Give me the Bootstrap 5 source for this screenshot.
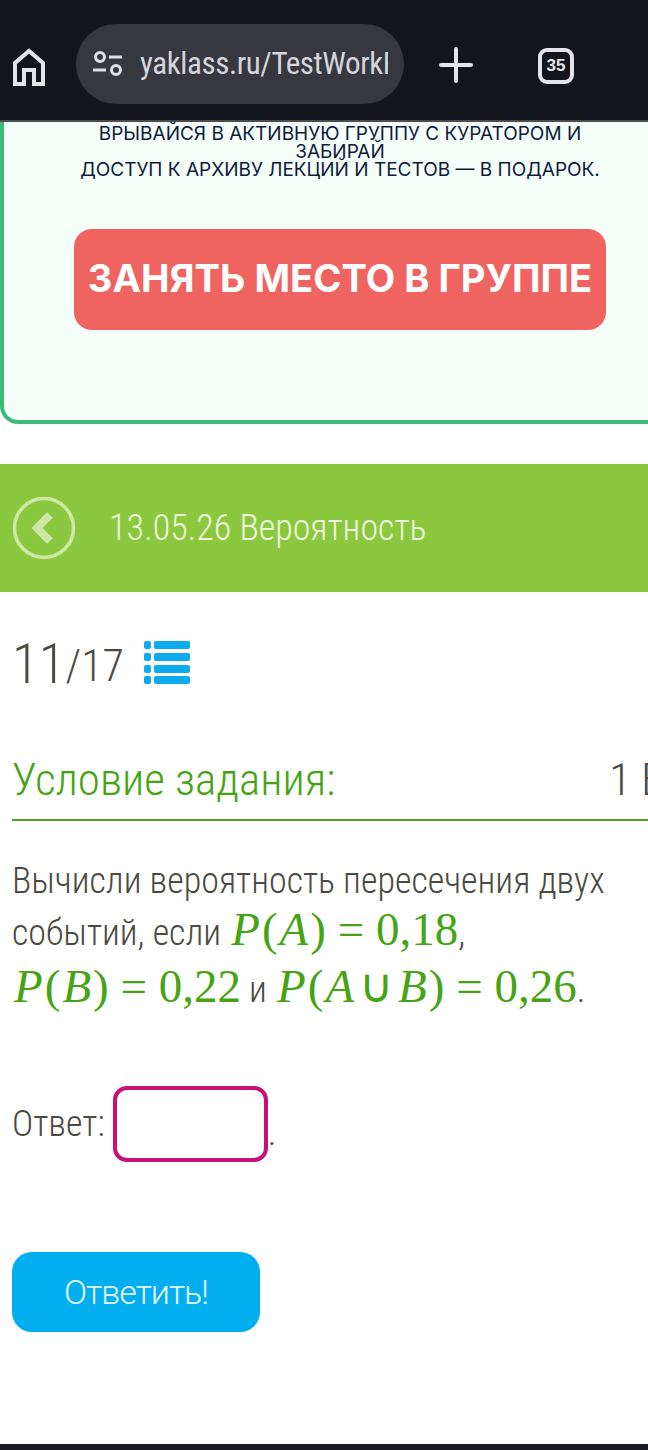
<!DOCTYPE html>
<html lang="ru">
<head>
  <meta charset="UTF-8" />
  <meta name="viewport" content="width=device-width, initial-scale=1.0" />
  <title>Условие задания</title>
  <link href="https://cdn.jsdelivr.net/npm/bootstrap@5.3.0/dist/css/bootstrap.min.css" rel="stylesheet" />
  <style>
    html, body { margin: 0; background: #fff; overflow: hidden; }
    .screen { width: 648px; height: 1450px; overflow: hidden; font-family: "Roboto", "Liberation Sans", sans-serif; font-weight: 300; font-stretch: 75%; color: #4a4a42; }

    .browser-bar { height: 122px; background: #14141c; border-bottom: 2px solid #4a4d50; padding: 24px 0 0 12px; }
    .home-ico { flex: none; }
    .url-pill { width: 328px; height: 80px; background: #37373f; border-radius: 40px; margin-left: 30px; padding-left: 16px; color: #d5d5da; font-size: 31px; font-weight: 400; overflow: hidden; white-space: nowrap; }
    .url-text { width: 248px; overflow: hidden; margin-left: 16px; letter-spacing: -.4px; }
    .tab-plus { margin-left: 35px; }
    .tab-count { margin-left: 65px; width: 36px; height: 36px; border: 4px solid #e4e4e8; border-radius: 9px; color: #e4e4e8; font: 700 17px "Liberation Sans", sans-serif; }

    .promo { width: 680px; height: 302px; background: #f5fffa; border: 4px solid #3dba78; border-top: 0; border-radius: 0 0 18px 18px; font-family: "Inter", "Liberation Sans", sans-serif; font-weight: 400; font-stretch: normal; color: #0f1b3d; font-size: 19px; line-height: 18px; text-align: center; }
    .promo-text { padding: 3px 70px 0; }
    .promo-btn { width: 532px; height: 101px; margin: 50px 0 0 70px; padding-bottom: 4px; background: #ef6461; border-radius: 18px; color: #fff; font-size: 38.2px; font-weight: 700; }

    .topic-bar { height: 128px; margin-top: 40px; background: #8cc83f; color: #eef8df; font-size: 36px; padding-left: 12px; }
    .back-btn { width: 64px; height: 64px; margin-right: 33px; }

    .counter { margin: 40px 0 0 12px; height: 64px; }
    .count-now { font-size: 55px; line-height: 64px; }
    .count-all { font-size: 44px; line-height: 64px; margin-top: 4px; }
    .list-ico { margin-left: 20px; margin-top: -2px; }

    .task-head { margin: 56px 0 0 12px; height: 69px; border-bottom: 2px solid #4aa31c; color: #46a414; font-size: 45px; line-height: 56px; white-space: nowrap; overflow: hidden; }
    .score { color: #4a4a42; margin-left: 274px; }

    .task-text { margin: 34px 0 0 12px; width: 620px; min-height: 162px; font-size: 36px; line-height: 52px; }
    .last-line { display: block; margin-top: 5px; }
    .formula { font-family: "Liberation Serif", serif; font-weight: 400; font-stretch: normal; font-size: 47px; line-height: 44px; color: #46a414; white-space: nowrap; }
    .formula i { font-style: italic; margin: 0 2px; }
    .union { margin: 0 3px; }

    .answer-row { margin: 69px 0 0 12px; font-size: 36px; height: 76px; }
    .answer-box { width: 155px; height: 76px; margin: 0 0 0 8px; border: 4px solid #c9107a; border-radius: 14px; background: #fff; outline: 0; }
    .dot { align-self: flex-end; margin-bottom: 2px; }

    .send-btn { display: block; width: 248px; height: 80px; margin: 90px 0 0 12px; padding: 0; background: #02aeef; border: 0; border-radius: 20px; color: #e2f6fe; font-size: 34px; letter-spacing: -1px; font-weight: 300; }
    .bottom-strip { height: 6px; margin-top: 112px; background: #1c1c26; }
  </style>
</head>
<body>
  <div class="screen">
    <div class="browser-bar d-flex align-items-start">
      <svg class="home-ico mt-4" width="34" height="38" viewBox="0 0 34 38" fill="none" stroke="#e4e4e8" stroke-width="4"><path d="M3 36V15L17 3l14 12v21h-9V22H12v14z"/></svg>
      <div class="url-pill d-flex align-items-center">
        <svg width="32" height="28" viewBox="0 0 32 28" fill="none" stroke="#e0e0e4" stroke-width="3"><circle cx="8" cy="7" r="4.5"/><path d="M17 7h13M1 20h13"/><circle cx="24" cy="20" r="4.5"/></svg>
        <div class="url-text">yaklass.ru/TestWorkRun</div>
      </div>
      <svg class="tab-plus mt-3" width="34" height="50" viewBox="0 0 34 50" stroke="#e4e4e8" stroke-width="4" stroke-linecap="round"><path d="M17 9v32M2 25h30"/></svg>
      <div class="tab-count d-flex align-items-center justify-content-center mt-4">35</div>
    </div>

    <div class="promo">
      <div class="promo-text">ВРЫВАЙСЯ В АКТИВНУЮ ГРУППУ С КУРАТОРОМ И ЗАБИРАЙ<br />ДОСТУП К АРХИВУ ЛЕКЦИЙ И ТЕСТОВ — В ПОДАРОК.</div>
      <div class="promo-btn d-flex align-items-center justify-content-center">ЗАНЯТЬ МЕСТО В ГРУППЕ</div>
    </div>

    <div class="topic-bar d-flex align-items-center">
      <svg class="back-btn" viewBox="0 0 64 64" fill="none" stroke="#cfe8a8"><circle cx="32" cy="32" r="29.5" stroke-width="3.5"/><path d="M38 19L25 32l13 13" stroke-width="8"/></svg>
      <span>13.05.26 Вероятность</span>
    </div>

    <div class="counter d-flex align-items-center">
      <span class="count-now">11</span><span class="count-all">/17</span>
      <svg class="list-ico" width="46" height="44" viewBox="0 0 46 44" fill="#0babee"><rect y="0" width="7" height="8" rx="2"/><rect x="10" y="0" width="36" height="8" rx="2"/><rect y="12" width="7" height="8" rx="2"/><rect x="10" y="12" width="36" height="8" rx="2"/><rect y="24" width="7" height="8" rx="2"/><rect x="10" y="24" width="36" height="8" rx="2"/><rect y="35" width="7" height="8" rx="2"/><rect x="10" y="35" width="36" height="8" rx="2"/></svg>
    </div>

    <div class="task-head">Условие задания:<span class="score">1 Балл</span></div>

    <div class="task-text">
      Вычисли вероятность пересечения двух событий, если <span class="formula"><i>P</i>(<i>A</i>) = 0,18</span>,
      <span class="last-line"><span class="formula"><i>P</i>(<i>B</i>) = 0,22</span> и <span class="formula"><i>P</i>(<i>A</i><span class="union">∪</span><i>B</i>) = 0,26</span>.</span>
    </div>

    <div class="answer-row d-flex align-items-center">
      <span>Ответ:</span>
      <input class="answer-box" type="text" aria-label="Ответ" />
      <span class="dot">.</span>
    </div>

    <button class="send-btn" type="button">Ответить!</button>
    <div class="bottom-strip"></div>
  </div>
  <script src="https://cdn.jsdelivr.net/npm/bootstrap@5.3.0/dist/js/bootstrap.bundle.min.js"></script>
</body>
</html>
